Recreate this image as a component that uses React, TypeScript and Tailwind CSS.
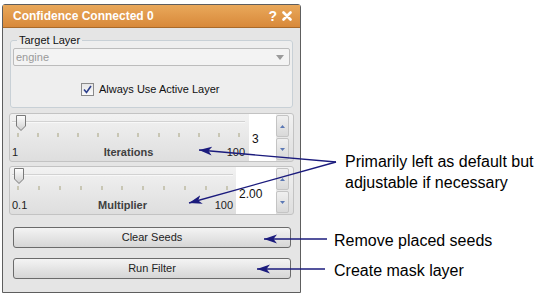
import React from 'react';

const Handle = () => (
  <svg width="12" height="18" viewBox="0 0 12 18" className="absolute left-0 top-0">
    <defs>
      <linearGradient id="hg" x1="0" y1="0" x2="0" y2="1">
        <stop offset="0" stopColor="#ffffff" />
        <stop offset="1" stopColor="#cfcfcf" />
      </linearGradient>
    </defs>
    <path d="M1.5,1.5 H10.5 V12 L6,16.5 L1.5,12 Z" fill="url(#hg)" stroke="#7a7a7a" strokeWidth="1" strokeLinejoin="round" />
  </svg>
);

const SpinButtons = () => (
  <div className="flex flex-col w-[13px] gap-[1px] py-[1px]">
    {['up', 'down'].map((d) => (
      <div key={d} className="flex-1 flex items-center justify-center bg-gradient-to-b from-[#f0f0f0] to-[#d9d9d9] border border-[#c4c4c4] rounded-[2px]">
        <svg width="5" height="3" viewBox="0 0 5 3">
          <path d={d === 'up' ? 'M0,3 L2.5,0 L5,3 Z' : 'M0,0 L2.5,3 L5,0 Z'} fill="#5b78b4" />
        </svg>
      </div>
    ))}
  </div>
);

const SliderBox = ({
  min,
  max,
  label,
  value,
  trackW,
  spinW,
  handleX,
  ticks,
  valueTop,
  className,
}: {
  min: string;
  max: string;
  label: string;
  value: string;
  trackW: number;
  spinW: number;
  handleX: number;
  ticks: number;
  valueTop: string;
  className: string;
}) => (
  <div className={`ml-[6px] w-[285px] h-[49px] flex border border-[#c3c3c3] rounded-[3px] bg-gradient-to-b from-[#f2f2f2] to-[#dedede] ${className}`}>
    <div className="flex flex-col pl-[2px]" style={{ width: trackW + 2 }}>
      <div className="relative h-[18px]">
        <div className="absolute left-0 right-0 top-[7px] h-[2px] bg-[#d2d2d2] border-b border-[#f8f8f8]" />
        <div className="absolute top-0" style={{ left: handleX }}>
          <Handle />
        </div>
      </div>
      <div className="flex justify-between px-[5px] h-[6px] mt-[1px]">
        {Array.from({ length: ticks }).map((_, i) => (
          <div key={i} className="w-[2px] h-[4px] bg-[#c8c6b4]" />
        ))}
      </div>
      <div className="flex items-center text-[11px] leading-[12px] mt-[7px] text-[#222]">
        <div className="flex-1">{min}</div>
        <div className="font-bold text-[#404040]">{label}</div>
        <div className="flex-1 text-right">{max}</div>
      </div>
    </div>
    <div className="ml-auto flex">
      <div className={`bg-white h-full pl-[3px] text-[12px] leading-[14px] text-[#111] ${valueTop}`} style={{ width: spinW }}>
        {value}
      </div>
      <SpinButtons />
      <div className="w-[4px]" />
    </div>
  </div>
);

const PanelButton = ({ text, className }: { text: string; className: string }) => (
  <div className={`ml-[10px] w-[278px] h-[21px] flex items-center justify-center border border-[#6b6b6b] rounded-[3px] bg-gradient-to-b from-[#f4f4f4] to-[#d6d6d6] text-[11px] text-[#222] ${className}`}>
    {text}
  </div>
);

export default function App() {
  return (
    <div className="relative w-[534px] h-[295px] bg-white overflow-hidden font-['Liberation_Sans',Arial,sans-serif]">
      <div className="flex">
        <div className="shrink-0 ml-[2px] mt-[4px] w-[299px] h-[289px] flex flex-col border border-[#5e5e5e] rounded-t-[3px] bg-[#e5e5e5]">
          <div className="h-[23px] flex items-center pl-[10px] pr-[8px] bg-gradient-to-b from-[#e9a85a] to-[#d8893a] border-b border-[#a96a2a] text-white">
            <span className="font-bold text-[12px]">Confidence Connected 0</span>
            <span className="ml-auto font-bold text-[14px]">?</span>
            <svg width="10" height="10" viewBox="0 0 10 10" className="ml-[5px]">
              <path d="M1.5,1.5 L8.5,8.5 M8.5,1.5 L1.5,8.5" stroke="#ffffff" strokeWidth="2.6" strokeLinecap="round" />
            </svg>
          </div>

          <fieldset className="ml-[7px] mt-[6px] w-[283px] border border-[#c8d0d6] rounded-[3px] bg-[#eeeeee] px-[2px] pb-[11px]">
            <legend className="ml-[4px] px-[2px] text-[11px] leading-[13px] text-[#111]">Target Layer</legend>
            <div className="mt-[1px] h-[18px] flex items-center px-[2px] border border-[#bcbcbc] rounded-[2px] bg-[#f3f3f3] text-[11px] text-[#9a9a9a]">
              <span>engine</span>
              <svg width="8" height="5" viewBox="0 0 8 5" className="ml-auto mr-[3px]">
                <path d="M0,0 L8,0 L4,5 Z" fill="#9a9a9a" />
              </svg>
            </div>
            <div className="mt-[17px] h-[13px] flex items-center pl-[68px]">
              <div className="w-[13px] h-[13px] border border-[#8a8a8a] bg-gradient-to-b from-[#e6e6e6] to-[#fafafa] flex items-center justify-center">
                <svg width="9" height="9" viewBox="0 0 9 9">
                  <path d="M1,4.5 L3.5,7.5 L8,1" fill="none" stroke="#2c3f8c" strokeWidth="1.6" />
                </svg>
              </div>
              <span className="ml-[5px] text-[11px] text-[#111]">Always Use Active Layer</span>
            </div>
          </fieldset>

          <SliderBox min="1" max="100" label="Iterations" value="3" trackW={233} spinW={27} handleX={3} ticks={12} valueTop="pt-[18px]" className="mt-[5px]" />
          <SliderBox min="0.1" max="100" label="Multiplier" value="2.00" trackW={221} spinW={40} handleX={1} ticks={11} valueTop="pt-[20px]" className="mt-[4px]" />

          <PanelButton text="Clear Seeds" className="mt-[12px]" />
          <PanelButton text="Run Filter" className="mt-[10px]" />
        </div>

        <div className="flex flex-col text-[16px] text-black">
          <div className="mt-[151px] pl-[44px] leading-[21px] whitespace-nowrap">
            <div>Primarily left as default but</div>
            <div>adjustable if necessary</div>
          </div>
          <div className="mt-[37px] pl-[33px] leading-[21px] whitespace-nowrap">Remove placed seeds</div>
          <div className="mt-[9px] pl-[33px] leading-[21px] whitespace-nowrap">Create mask layer</div>
        </div>
      </div>

      <svg width="534" height="295" viewBox="0 0 534 295" className="absolute inset-0 pointer-events-none">
        <defs>
          <marker id="ah" markerUnits="userSpaceOnUse" markerWidth="14" markerHeight="10" refX="13" refY="4.5" orient="auto">
            <path d="M0,0 L13,4.5 L0,9 L3.5,4.5 Z" fill="#1b1b7d" />
          </marker>
        </defs>
        <g stroke="#1b1b7d" strokeWidth="1.3" fill="none">
          <line x1="336" y1="162" x2="199" y2="150" markerEnd="url(#ah)" />
          <line x1="336" y1="162" x2="189" y2="203" markerEnd="url(#ah)" />
          <line x1="327" y1="239" x2="264" y2="239" markerEnd="url(#ah)" />
          <line x1="325" y1="269" x2="257" y2="269" markerEnd="url(#ah)" />
        </g>
      </svg>
    </div>
  );
}
